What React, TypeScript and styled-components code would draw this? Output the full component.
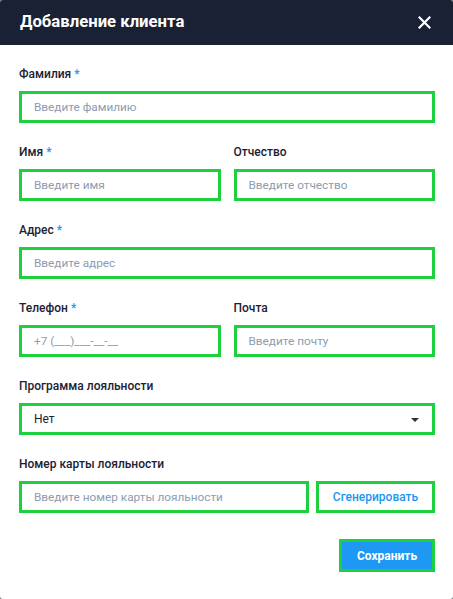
import React from "react";
import styled, { createGlobalStyle } from "styled-components";

const GlobalStyle = createGlobalStyle`
  html, body {
    margin: 0;
    padding: 0;
    background: #7a7d85;
  }
  body {
    font-family: Roboto, "Liberation Sans", Arial, sans-serif;
  }
`;

const Modal = styled.div`
  width: 453px;
  height: 599px;
  background: #ffffff;
  border-radius: 3px;
  overflow: hidden;
  display: flex;
  flex-direction: column;
`;

const Header = styled.div`
  height: 45px;
  flex-shrink: 0;
  background: #1b2134;
  display: flex;
  align-items: center;
  justify-content: space-between;
  padding: 0 22px 2px 20px;
  box-sizing: border-box;
`;

const Title = styled.h2`
  margin: 0;
  font-size: 16.7px;
  font-weight: 700;
  color: #ffffff;
`;

const CloseButton = styled.button`
  border: none;
  background: transparent;
  padding: 0;
  width: 14px;
  height: 14px;
  display: flex;
  align-items: center;
  justify-content: center;
  cursor: pointer;
  margin-top: 1px;
`;

const Body = styled.div`
  display: flex;
  flex-direction: column;
  gap: 21px;
  padding: 21px 18px 0 19px;
`;

const Row = styled.div`
  display: flex;
  gap: 13px;
`;

const Field = styled.div`
  flex: 1;
  display: flex;
  flex-direction: column;
  gap: 9px;
  min-width: 0;
`;

const Label = styled.label`
  font-size: 12px;
  line-height: 16px;
  font-weight: 500;
  color: #1c2233;
`;

const Required = styled.span`
  color: #2196f3;
  margin-left: 3px;
`;

const Input = styled.input`
  height: 32px;
  box-sizing: border-box;
  border: 3px solid #1fd03e;
  outline: none;
  padding: 0 12px;
  font-family: Roboto, "Liberation Sans", Arial, sans-serif;
  font-size: 11.8px;
  color: #1c2233;
  background: #ffffff;
  width: 100%;
  min-width: 0;

  &::placeholder {
    color: #8e9bb0;
  }
`;

const Select = styled.div`
  height: 32px;
  box-sizing: border-box;
  border: 3px solid #1fd03e;
  padding: 0 13px 0 12px;
  display: flex;
  align-items: center;
  justify-content: space-between;
  font-size: 12px;
  color: #1c2233;
`;

const Caret = styled.span`
  width: 0;
  height: 0;
  border-left: 4px solid transparent;
  border-right: 4px solid transparent;
  border-top: 4px solid #2a3040;
  margin-top: 1px;
`;

const InlineRow = styled.div`
  display: flex;
  gap: 7px;
`;

const OutlineButton = styled.button`
  height: 32px;
  width: 119px;
  flex-shrink: 0;
  box-sizing: border-box;
  border: 3px solid #1fd03e;
  background: #ffffff;
  color: #2196f3;
  font-family: Roboto, "Liberation Sans", Arial, sans-serif;
  font-size: 12px;
  font-weight: 500;
  cursor: pointer;
`;

const Footer = styled.div`
  display: flex;
  justify-content: flex-end;
  padding: 5px 0 0;
`;

const PrimaryButton = styled.button`
  height: 33px;
  width: 96px;
  box-sizing: border-box;
  border: 3px solid #1fd03e;
  background: #1e98f2;
  color: #ffffff;
  font-family: Roboto, "Liberation Sans", Arial, sans-serif;
  font-size: 12px;
  font-weight: 700;
  cursor: pointer;
`;

const App: React.FC = () => {
  return (
    <>
      <GlobalStyle />
      <Modal>
        <Header>
          <Title>Добавление клиента</Title>
          <CloseButton aria-label="Закрыть">
            <svg width="13" height="13" viewBox="0 0 13 13">
              <path
                d="M1.5 1.5 L11.5 11.5 M11.5 1.5 L1.5 11.5"
                stroke="#ffffff"
                strokeWidth="2.2"
                strokeLinecap="square"
              />
            </svg>
          </CloseButton>
        </Header>
        <Body>
          <Field>
            <Label>
              Фамилия<Required>*</Required>
            </Label>
            <Input placeholder="Введите фамилию" />
          </Field>
          <Row>
            <Field>
              <Label>
                Имя<Required>*</Required>
              </Label>
              <Input placeholder="Введите имя" />
            </Field>
            <Field>
              <Label>Отчество</Label>
              <Input placeholder="Введите отчество" />
            </Field>
          </Row>
          <Field>
            <Label>
              Адрес<Required>*</Required>
            </Label>
            <Input placeholder="Введите адрес" />
          </Field>
          <Row>
            <Field>
              <Label>
                Телефон<Required>*</Required>
              </Label>
              <Input placeholder="+7 (___)___-__-__" />
            </Field>
            <Field>
              <Label>Почта</Label>
              <Input placeholder="Введите почту" />
            </Field>
          </Row>
          <Field>
            <Label>Программа лояльности</Label>
            <Select>
              <span>Нет</span>
              <Caret />
            </Select>
          </Field>
          <Field>
            <Label>Номер карты лояльности</Label>
            <InlineRow>
              <Input placeholder="Введите номер карты лояльности" />
              <OutlineButton>Сгенерировать</OutlineButton>
            </InlineRow>
          </Field>
          <Footer>
            <PrimaryButton>Сохранить</PrimaryButton>
          </Footer>
        </Body>
      </Modal>
    </>
  );
};

export default App;
